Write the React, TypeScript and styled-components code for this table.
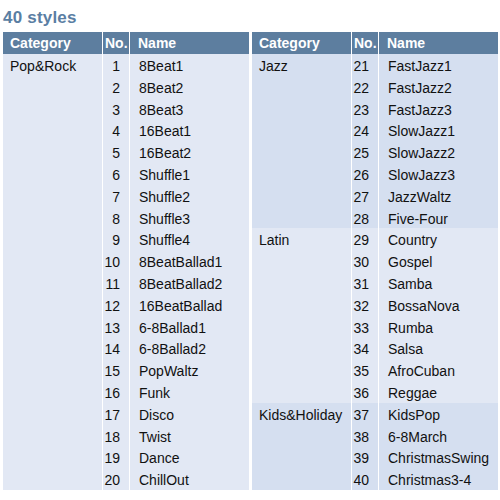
import React from "react";
import styled, { createGlobalStyle } from "styled-components";

const Global = createGlobalStyle`
  html, body { margin: 0; padding: 0; background: #ffffff; }
  body { font-family: "Liberation Sans", Arial, Helvetica, sans-serif; }
`;

type Tone = "light" | "dark";

const bg = (t: Tone) => (t === "dark" ? "#d5dff0" : "#e2e8f4");

const Page = styled.div`
  width: 500px;
  padding: 8px 2px 0 3px;
  box-sizing: border-box;
`;

const Title = styled.h1`
  margin: 0;
  font-size: 17px;
  line-height: 20px;
  font-weight: bold;
  color: #5a7ea3;
  letter-spacing: 0.2px;
`;

const Tables = styled.div`
  margin-top: 4px;
  display: flex;
  gap: 3px;
`;

const Grid = styled.div`
  flex: 1;
  display: grid;
  grid-template-columns: 99px 26px 1fr;
  grid-template-rows: 22px repeat(20, 21.8px);
  column-gap: 1px;
  background: #ffffff;
`;

const Head = styled.div<{ $col: number }>`
  grid-column: ${(p) => p.$col};
  background: #5d7e9f;
  color: #ffffff;
  font-weight: bold;
  font-size: 14px;
  line-height: 21px;
  padding-top: 1px;
  padding-left: ${(p) => (p.$col === 2 ? 2 : p.$col === 3 ? 8 : 7)}px;
  white-space: nowrap;
`;

const cellText = `
  color: #111;
  font-size: 14px;
  line-height: 18.8px;
  padding-top: 3px;
  white-space: nowrap;
`;

const CatCell = styled.div<{ $span: number; $tone: Tone }>`
  grid-column: 1;
  grid-row: span ${(p) => p.$span};
  background: ${(p) => bg(p.$tone)};
  ${cellText}
  padding-left: 7px;
`;

const NoCell = styled.div<{ $tone: Tone }>`
  grid-column: 2;
  background: ${(p) => bg(p.$tone)};
  ${cellText}
  text-align: right;
  padding-right: 9px;
`;

const NameCell = styled.div<{ $tone: Tone }>`
  grid-column: 3;
  background: ${(p) => bg(p.$tone)};
  ${cellText}
  padding-left: 9px;
`;

type Group = { cat: string; tone: Tone; start: number; names: string[] };

const left: Group[] = [
  {
    cat: "Pop&Rock",
    tone: "light",
    start: 1,
    names: [
      "8Beat1", "8Beat2", "8Beat3", "16Beat1", "16Beat2", "Shuffle1", "Shuffle2",
      "Shuffle3", "Shuffle4", "8BeatBallad1", "8BeatBallad2", "16BeatBallad",
      "6-8Ballad1", "6-8Ballad2", "PopWaltz", "Funk", "Disco", "Twist", "Dance", "ChillOut",
    ],
  },
];

const right: Group[] = [
  {
    cat: "Jazz",
    tone: "dark",
    start: 21,
    names: ["FastJazz1", "FastJazz2", "FastJazz3", "SlowJazz1", "SlowJazz2", "SlowJazz3", "JazzWaltz", "Five-Four"],
  },
  {
    cat: "Latin",
    tone: "light",
    start: 29,
    names: ["Country", "Gospel", "Samba", "BossaNova", "Rumba", "Salsa", "AfroCuban", "Reggae"],
  },
  {
    cat: "Kids&Holiday",
    tone: "dark",
    start: 37,
    names: ["KidsPop", "6-8March", "ChristmasSwing", "Christmas3-4"],
  },
];

const StyleTable = ({ groups }: { groups: Group[] }) => (
  <Grid>
    <Head $col={1}>Category</Head>
    <Head $col={2}>No.</Head>
    <Head $col={3}>Name</Head>
    {groups.map((g) => (
      <React.Fragment key={g.cat}>
        <CatCell $span={g.names.length} $tone={g.tone}>
          {g.cat}
        </CatCell>
        {g.names.map((n, i) => (
          <React.Fragment key={n}>
            <NoCell $tone={g.tone}>{g.start + i}</NoCell>
            <NameCell $tone={g.tone}>{n}</NameCell>
          </React.Fragment>
        ))}
      </React.Fragment>
    ))}
  </Grid>
);

export default function App() {
  return (
    <Page>
      <Global />
      <Title>40 styles</Title>
      <Tables>
        <StyleTable groups={left} />
        <StyleTable groups={right} />
      </Tables>
    </Page>
  );
}
